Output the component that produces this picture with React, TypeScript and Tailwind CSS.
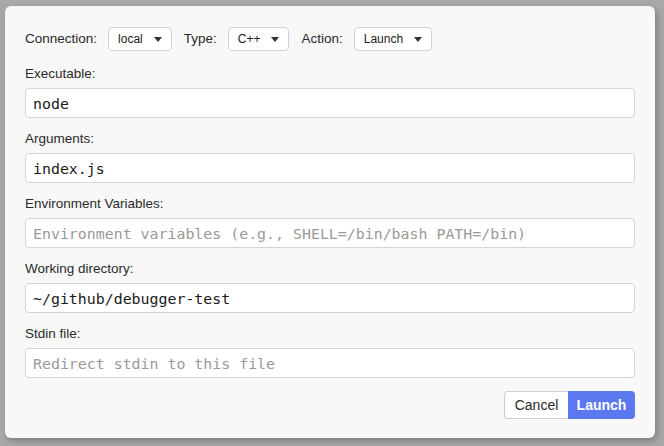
import React from "react";

const sans = { fontFamily: '"Liberation Sans", Arial, sans-serif' };

function Caret() {
  return (
    <svg width="8" height="5" viewBox="0 0 8 5" className="ml-[11px]">
      <path d="M0 0 H8 L4 5 Z" fill="#333" />
    </svg>
  );
}

function Select({ value }: { value: string }) {
  return (
    <div className="flex h-[24px] items-center rounded-[4px] border border-[#d2d2d2] bg-white pl-[9px] pr-[9px] text-[12px] text-[#222]">
      {value}
      <Caret />
    </div>
  );
}

const fields = [
  { label: "Executable:", value: "node" },
  { label: "Arguments:", value: "index.js" },
  {
    label: "Environment Variables:",
    placeholder: "Environment variables (e.g., SHELL=/bin/bash PATH=/bin)",
  },
  { label: "Working directory:", value: "~/github/debugger-test" },
  { label: "Stdin file:", placeholder: "Redirect stdin to this file" },
];

export default function App() {
  return (
    <div
      className="h-[446px] w-[664px] bg-[#a8a8a8] pl-[5px] pt-[6px]"
      style={sans}
    >
      <div className="flex h-[432px] w-[650px] flex-col rounded-[6px] bg-[#f8f8f8] px-[20px] pt-[21px] shadow-[2px_3px_6px_rgba(0,0,0,0.25)]">
        <div className="flex items-center text-[13.5px] text-[#2a2a2a]">
          <span className="mr-[11px]">Connection:</span>
          <Select value="local" />
          <span className="ml-[12px] mr-[11px]">Type:</span>
          <Select value="C++" />
          <span className="ml-[12px] mr-[11px]">Action:</span>
          <Select value="Launch" />
        </div>

        <div className="mt-[15px] flex flex-col">
          {fields.map((f) => (
            <div key={f.label} className="mb-[13px] flex flex-col">
              <label className="mb-[6px] h-[16px] text-[13.5px] leading-[16px] text-[#2a2a2a]">
                {f.label}
              </label>
              <div
                className={`flex h-[30px] items-center rounded-[4px] border border-[#d4d4d4] bg-white px-[7px] pt-[2px] text-[14.9px] ${f.value ? "text-[#1a1a1a]" : "text-[#9a9a9a]"}`}
                style={{ fontFamily: '"DejaVu Sans Mono", Menlo, monospace' }}
              >
                {f.value ?? f.placeholder}
              </div>
            </div>
          ))}
        </div>

        <div className="flex justify-end">
          <button className="h-[28px] w-[64px] rounded-l-[4px] border border-r-0 border-[#cfcfcf] bg-white text-[14px] text-[#2a2a2a]">
            Cancel
          </button>
          <button className="h-[28px] w-[67px] rounded-r-[4px] bg-[#5b78ef] text-[14px] font-semibold text-white">
            Launch
          </button>
        </div>
      </div>
    </div>
  );
}
